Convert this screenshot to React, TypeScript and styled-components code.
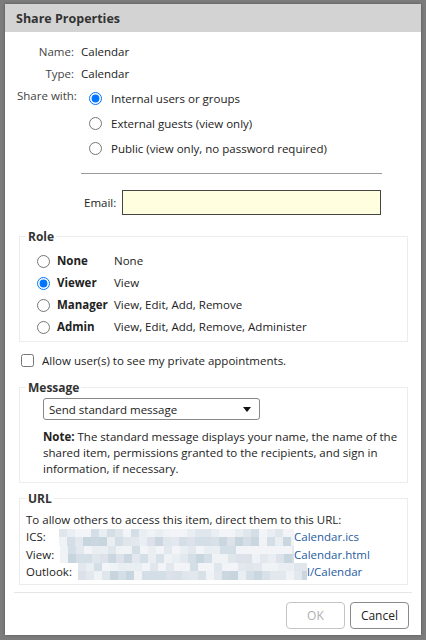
import React from 'react';
import styled, { createGlobalStyle } from 'styled-components';

const GlobalStyle = createGlobalStyle`
  html, body {
    margin: 0;
    padding: 0;
    background: #7c7c7c;
  }
  body {
    font-family: "Open Sans", "Noto Sans", sans-serif;
    font-size: 11.5px;
    color: #222;
  }
`;

const Overlay = styled.div`
  width: 426px;
  height: 640px;
  padding: 4px 5px 0 5px;
  box-sizing: border-box;
`;

const Dialog = styled.div`
  width: 416px;
  height: 631px;
  background: #fff;
  display: flex;
  flex-direction: column;
  box-shadow: 0 0 3px rgba(0, 0, 0, 0.3);
`;

const Header = styled.div`
  height: 28px;
  background: #d3d3d3;
  display: flex;
  align-items: center;
  padding-left: 11px;
  font-weight: 700;
  font-size: 12.5px;
  color: #333;
`;

const Body = styled.div`
  flex: 1;
  padding: 0 9px;
  display: flex;
  flex-direction: column;
`;

const InfoGrid = styled.div`
  display: grid;
  grid-template-columns: 60px 1fr;
  column-gap: 7px;
  margin-top: 9px;
`;

const InfoLabel = styled.div<{ $left?: boolean }>`
  text-align: ${p => (p.$left ? 'left' : 'right')};
  color: #444;
  height: 22px;
  line-height: 22px;
  white-space: nowrap;
  ${p => p.$left && 'padding-left: 3px;'}
`;

const InfoValue = styled.div`
  height: 22px;
  line-height: 22px;
`;

const ShareOptions = styled.div`
  display: flex;
  flex-direction: column;
  gap: 3px;
  padding-top: 2px;
`;

const RadioRow = styled.label`
  display: flex;
  align-items: center;
  height: 22px;
  gap: 9px;
  margin-left: 8px;
`;

const Radio = styled.input.attrs({ type: 'radio' })`
  width: 13px;
  height: 13px;
  margin: 0;
  accent-color: #0075ff;
`;

const Divider = styled.hr`
  border: none;
  border-top: 1px solid #9a9a9a;
  margin: 14px 30px 0 67px;
`;

const EmailRow = styled.div`
  display: flex;
  align-items: center;
  margin: 16px 0 0 70px;
  gap: 6px;
`;

const EmailInput = styled.input`
  width: 253px;
  height: 23px;
  box-sizing: content-box;
  padding: 0 2px;
  border: 1px solid #444;
  background: #ffffe0;
  outline: none;
`;

const Group = styled.fieldset<{ $top: number }>`
  margin: ${p => p.$top}px 4px 0 5px;
  padding: 0 6px 3px 6px;
  border: 1px solid #ececec;
  min-width: 0;
`;

const Legend = styled.legend`
  font-weight: 700;
  padding: 0 2px;
  color: #333;
  font-size: 12px;
`;

const RoleGrid = styled.div`
  display: grid;
  grid-template-columns: 13px 50px 1fr;
  column-gap: 7px;
  align-items: center;
  padding: 5px 0 0 11px;
`;

const RoleName = styled.span`
  font-weight: 700;
  font-size: 11.5px;
  height: 22px;
  line-height: 22px;
  white-space: nowrap;
`;

const RoleDesc = styled.span`
  height: 22px;
  line-height: 22px;
`;

const CheckRow = styled.label`
  display: flex;
  align-items: center;
  gap: 8px;
  margin: 11px 0 0 7px;
`;

const Checkbox = styled.input.attrs({ type: 'checkbox' })`
  width: 13px;
  height: 13px;
  margin: 0;
`;

const MessageBody = styled.div`
  padding: 2px 0 2px 17px;
`;

const Select = styled.div`
  width: 202px;
  height: 20px;
  border: 1px solid #888;
  border-radius: 3px;
  display: flex;
  align-items: center;
  justify-content: space-between;
  padding: 0 8px 0 5px;
`;

const Caret = styled.span`
  width: 0;
  height: 0;
  border-left: 4px solid transparent;
  border-right: 4px solid transparent;
  border-top: 5px solid #111;
`;

const Note = styled.p`
  margin: 9px 0 0 0;
  line-height: 16px;
`;

const UrlBody = styled.div`
  padding: 4px 0 0 0;
  line-height: 17.4px;
`;

const UrlLine = styled.div`
  display: flex;
  align-items: center;
  white-space: nowrap;
`;

const UrlLabel = styled.span<{ $w: number }>`
  width: ${p => p.$w}px;
  flex: none;
`;

const Link = styled.span`
  color: #1f5c9e;
`;

const Mosaic = styled.span<{ $w: number }>`
  display: inline-grid;
  grid-template-rows: 8px 9px;
  grid-auto-flow: column;
  width: ${p => p.$w}px;
  overflow: hidden;
  flex: none;
`;

const Tile = styled.span`
  width: 8px;
`;

const Footer = styled.div`
  margin-top: 7px;
  border-top: 1px solid #e6e6e6;
  display: flex;
  justify-content: flex-end;
  gap: 5px;
  padding: 9px 3px 0 0;
`;

const Button = styled.button<{ $disabled?: boolean }>`
  height: 27px;
  min-width: 59px;
  font: inherit;
  font-size: 12px;
  background: #fff;
  border-radius: 4px;
  border: 1px solid ${p => (p.$disabled ? '#c4c4c4' : '#8a8a8a')};
  color: ${p => (p.$disabled ? '#b0b0b0' : '#222')};
  padding: 0 10px;
`;

const shades = ['#e9eef2', '#dfe6ec', '#d4dee6', '#cbd7e0', '#e3e8ee', '#f0f3f6', '#d8e0e8', '#c7d5df', '#dde2ea'];

function Redacted({ width, seed }: { width: number; seed: number }) {
  const count = Math.ceil(width / 8) * 2;
  let s = seed;
  const tiles = Array.from({ length: count }, (_, i) => {
    s = (s * 9301 + 49297) % 233280;
    const idx = Math.floor((s / 233280) * shades.length);
    const top = i % 2 === 0;
    const color = top ? (idx % 3 === 0 ? '#f2f4f7' : shades[Math.max(0, idx - 3)]) : shades[idx];
    return <Tile key={i} style={{ background: color }} />;
  });
  return <Mosaic $w={width}>{tiles}</Mosaic>;
}

const roles = [
  { name: 'None', desc: 'None' },
  { name: 'Viewer', desc: 'View', checked: true },
  { name: 'Manager', desc: 'View, Edit, Add, Remove' },
  { name: 'Admin', desc: 'View, Edit, Add, Remove, Administer' },
];

export default function App() {
  return (
    <>
      <GlobalStyle />
      <Overlay>
        <Dialog>
          <Header>Share Properties</Header>
          <Body>
            <InfoGrid>
              <InfoLabel>Name:</InfoLabel>
              <InfoValue>Calendar</InfoValue>
              <InfoLabel>Type:</InfoLabel>
              <InfoValue>Calendar</InfoValue>
              <InfoLabel $left>Share with:</InfoLabel>
              <ShareOptions>
                <RadioRow>
                  <Radio name="share" defaultChecked />
                  Internal users or groups
                </RadioRow>
                <RadioRow>
                  <Radio name="share" />
                  External guests (view only)
                </RadioRow>
                <RadioRow>
                  <Radio name="share" />
                  Public (view only, no password required)
                </RadioRow>
              </ShareOptions>
            </InfoGrid>
            <Divider />
            <EmailRow>
              <span>Email:</span>
              <EmailInput />
            </EmailRow>

            <Group $top={13}>
              <Legend>Role</Legend>
              <RoleGrid>
                {roles.map(r => (
                  <React.Fragment key={r.name}>
                    <Radio name="role" defaultChecked={r.checked} />
                    <RoleName>{r.name}</RoleName>
                    <RoleDesc>{r.desc}</RoleDesc>
                  </React.Fragment>
                ))}
              </RoleGrid>
            </Group>

            <CheckRow>
              <Checkbox />
              Allow user(s) to see my private appointments.
            </CheckRow>

            <Group $top={11}>
              <Legend>Message</Legend>
              <MessageBody>
                <Select>
                  <span>Send standard message</span>
                  <Caret />
                </Select>
                <Note>
                  <b>Note:</b> The standard message displays your name, the name of the shared item, permissions granted to the recipients, and sign in information, if necessary.
                </Note>
              </MessageBody>
            </Group>

            <Group $top={7}>
              <Legend>URL</Legend>
              <UrlBody>
                <div>To allow others to access this item, direct them to this URL:</div>
                <UrlLine>
                  <UrlLabel $w={33}>ICS:</UrlLabel>
                  <Redacted width={235} seed={7} />
                  <Link>Calendar.ics</Link>
                </UrlLine>
                <UrlLine>
                  <UrlLabel $w={34}>View:</UrlLabel>
                  <Redacted width={234} seed={19} />
                  <Link>Calendar.html</Link>
                </UrlLine>
                <UrlLine>
                  <UrlLabel $w={52}>Outlook:</UrlLabel>
                  <Redacted width={229} seed={41} />
                  <Link>l/Calendar</Link>
                </UrlLine>
              </UrlBody>
            </Group>

            <Footer>
              <Button $disabled disabled>OK</Button>
              <Button>Cancel</Button>
            </Footer>
          </Body>
        </Dialog>
      </Overlay>
    </>
  );
}
